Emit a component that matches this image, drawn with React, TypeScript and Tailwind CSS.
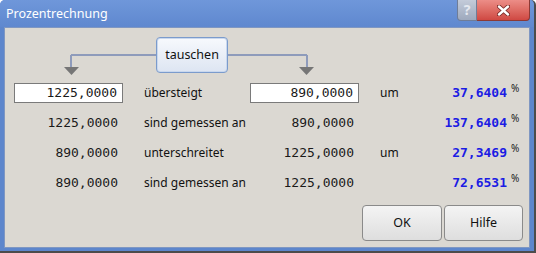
export default function App() {
  const rows = [
    { a: "1225,0000", label: "übersteigt", b: "890,0000", um: true, pct: "37,6404", input: true },
    { a: "1225,0000", label: "sind gemessen an", b: "890,0000", um: false, pct: "137,6404", input: false },
    { a: "890,0000", label: "unterschreitet", b: "1225,0000", um: true, pct: "27,3469", input: false },
    { a: "890,0000", label: "sind gemessen an", b: "1225,0000", um: false, pct: "72,6531", input: false },
  ];

  const mono = "font-['DejaVu_Sans_Mono','Liberation_Mono',monospace] text-[13px] text-[#1a1a1a]";
  const ui = "font-['Noto_Sans','Open_Sans',sans-serif]";

  return (
    <div className={`w-[536px] h-[253px] flex flex-col bg-[#5d86cc] border-r-2 border-b-2 border-[#4c4c4c] rounded-tl-[5px] rounded-tr-[5px] ${ui}`}>
      {/* Title bar */}
      <div className="h-[27px] flex items-start bg-gradient-to-b from-[#6f97da] to-[#5f88cf] rounded-t-[5px]">
        <div className="pl-[6px] pt-[5px] text-[12.5px] leading-[18px] text-white whitespace-nowrap">Prozentrechnung</div>
        <div className="ml-auto mr-[4px] flex h-[21px]">
          <div className="w-[20px] h-[21px] flex items-center justify-center bg-gradient-to-b from-[#c3cbd9] to-[#9ea9bd] border border-[#6f7d98] border-t-0 rounded-bl-[4px] text-[#e4e8ef] text-[14px] font-bold leading-none">
            ?
          </div>
          <div className="w-[53px] h-[21px] flex items-center justify-center bg-gradient-to-b from-[#ec8d87] to-[#cf4842] border border-[#8c3935] border-t-0 border-l-0 rounded-br-[4px]">
            <svg width="13" height="11" viewBox="0 0 13 11">
              <path d="M2 1.5 L11 9.5 M11 1.5 L2 9.5" stroke="#7a2a26" strokeWidth="4.2" strokeLinecap="round" />
              <path d="M2 1.5 L11 9.5 M11 1.5 L2 9.5" stroke="#ffffff" strokeWidth="2.4" strokeLinecap="round" />
            </svg>
          </div>
        </div>
      </div>

      {/* Client area */}
      <div className="mx-[4px] h-[221px] bg-[#dbd8d2] border border-[#7f97c2] flex flex-col">
        {/* swap button with connector arrows */}
        <div className="relative h-[55px] pt-[9px] pl-[151px]">
          <svg className="absolute inset-0" width="526" height="55">
            <path d="M66 27 H302 M66 27 V39 M302 27 V39" stroke="#8e9bbb" strokeWidth="2" fill="none" />
            <polygon points="59,39 74,39 66.5,47" fill="#767676" />
            <polygon points="294,39 309,39 301.5,47" fill="#767676" />
          </svg>
          <button className="relative w-[72px] h-[36px] rounded-[4px] border border-[#7b9bcc] bg-gradient-to-b from-[#f7f9fd] to-[#dde5f2] shadow-[inset_0_0_0_1px_#c9d8ee] text-[12.5px] text-[#111]">
            tauschen
          </button>
        </div>

        {/* result rows */}
        <div className="grid grid-cols-[109px_127px_109px_60px_88px_20px] auto-rows-[20px] gap-y-[10px] pl-[9px]">
          {rows.map((r, i) => (
            <div key={i} className="contents">
              <div
                className={`h-[20px] flex items-center justify-end pr-[5px] ${mono} ${
                  r.input ? "bg-white border border-[#7a7a7a]" : ""
                }`}
              >
                {r.a}
              </div>
              <div className="flex items-center pl-[21px] text-[12px] text-[#111] whitespace-nowrap">{r.label}</div>
              <div
                className={`h-[20px] flex items-center justify-end pr-[5px] ${mono} ${
                  r.input ? "bg-white border border-[#7a7a7a]" : ""
                }`}
              >
                {r.b}
              </div>
              <div className="flex items-center pl-[21px] text-[12px] text-[#111]">{r.um ? "um" : ""}</div>
              <div className="flex items-center justify-end font-['DejaVu_Sans_Mono','Liberation_Mono',monospace] text-[13px] font-bold text-[#1c1ce4]">
                {r.pct}
              </div>
              <div className="pl-[4px] -mt-[1px] text-[10px] leading-[12px] text-[#222]">%</div>
            </div>
          ))}
        </div>

        {/* dialog buttons */}
        <div className="mt-auto mb-[6px] flex justify-end gap-[2px] pr-[6px]">
          <button className="w-[80px] h-[36px] rounded-[4px] border border-[#8a8a8a] bg-gradient-to-b from-[#f4f4f4] to-[#dedede] text-[12.5px] text-[#111]">
            OK
          </button>
          <button className="w-[79px] h-[36px] rounded-[4px] border border-[#8a8a8a] bg-gradient-to-b from-[#f4f4f4] to-[#dedede] text-[12.5px] text-[#111]">
            Hilfe
          </button>
        </div>
      </div>
    </div>
  );
}
